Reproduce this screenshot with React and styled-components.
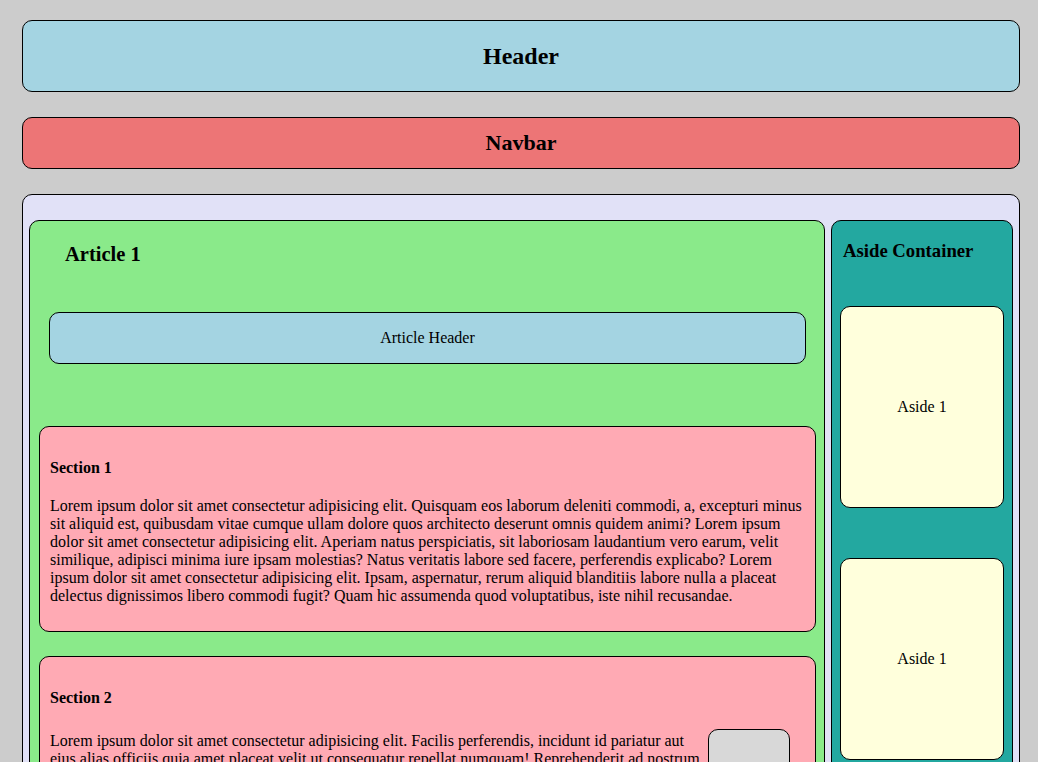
import React from 'react'
import styled, { createGlobalStyle } from 'styled-components'

const GlobalStyle = createGlobalStyle`
	html, body {
		margin: 0;
		background-color: #cccccc;
		font-family: "Liberation Serif", "Times New Roman", serif;
		color: #000;
	}
`

const Page = styled.div`
	padding: 20px 18px 0 22px;
	display: flex;
	flex-direction: column;
	gap: 25px;
`

const Bar = styled.div`
	box-sizing: border-box;
	height: ${(p) => p.$height}px;
	display: flex;
	align-items: center;
	justify-content: center;
	background-color: ${(p) => p.$bg};
	border: 1px solid #000;
	border-radius: 10px;
	font-size: ${(p) => p.$size}px;
	font-weight: bold;
`

const Main = styled.main`
	display: grid;
	grid-template-columns: 1fr 182px;
	gap: 6px;
	align-items: start;
	padding: 25px 6px 20px;
	background-color: #e1e1f7;
	border: 1px solid #000;
	border-radius: 10px;
`

const Article = styled.article`
	padding: 9px 8px 9px 9px;
	background-color: #8aea8a;
	border: 1px solid #000;
	border-radius: 10px;
`

const ArticleTitle = styled.h2`
	margin: 12px 0 0 26px;
	font-size: 20.5px;
	line-height: 24px;
`

const ArticleHeader = styled.header`
	margin: 46px 10px 62px;
	padding: 16px;
	text-align: center;
	font-size: 16px;
	line-height: 18px;
	background-color: #a4d4e2;
	border: 1px solid #000;
	border-radius: 10px;
`

const Section = styled.section`
	margin-bottom: 24px;
	padding: 0 10px;
	background-color: #ffaab4;
	border: 1px solid #000;
	border-radius: 10px;
	overflow: hidden;
`

const SectionTitle = styled.h4`
	margin: 32px 0 20px;
	font-size: 16px;
	line-height: 18px;
`

const Text = styled.p`
	margin: ${(p) => (p.$offset ? '3px 0 26px' : '0 0 26px')};
	font-size: 16px;
	line-height: 18px;
`

const SectionBody = styled.div`
	display: flex;
	align-items: flex-start;
	margin-top: 22px;
`

const Thumb = styled.div`
	flex: none;
	width: 82px;
	height: 120px;
	margin: 0 15px 0 4px;
	box-sizing: border-box;
	background-color: #d8d8d8;
	border: 1px solid #000;
	border-radius: 10px;
`

const Aside = styled.aside`
	padding: 8px 8px 20px;
	background-color: #23a8a0;
	border: 1px solid #000;
	border-radius: 10px;
`

const AsideTitle = styled.h3`
	margin: 11px 0 0 3px;
	font-size: 18.72px;
	line-height: 22px;
`

const AsideList = styled.div`
	display: flex;
	flex-direction: column;
	gap: 50px;
	margin-top: 44px;
`

const AsideCard = styled.div`
	box-sizing: border-box;
	height: 202px;
	display: flex;
	align-items: center;
	justify-content: center;
	font-size: 16px;
	background-color: #ffffdc;
	border: 1px solid #000;
	border-radius: 10px;
`

const loremOne =
	'Lorem ipsum dolor sit amet consectetur adipisicing elit. Quisquam eos laborum deleniti commodi, a, excepturi minus sit aliquid est, quibusdam vitae cumque ullam dolore quos architecto deserunt omnis quidem animi? Lorem ipsum dolor sit amet consectetur adipisicing elit. Aperiam natus perspiciatis, sit laboriosam laudantium vero earum, velit similique, adipisci minima iure ipsam molestias? Natus veritatis labore sed facere, perferendis explicabo? Lorem ipsum dolor sit amet consectetur adipisicing elit. Ipsam, aspernatur, rerum aliquid blanditiis labore nulla a placeat delectus dignissimos libero commodi fugit? Quam hic assumenda quod voluptatibus, iste nihil recusandae.'

const loremTwo =
	'Lorem ipsum dolor sit amet consectetur adipisicing elit. Facilis perferendis, incidunt id pariatur aut eius alias officiis quia amet placeat velit ut consequatur repellat numquam! Reprehenderit ad nostrum voluptates quibusdam eveniet, sequi cumque natus. Lorem ipsum dolor sit amet consectetur adipisicing elit. Omnis, quod.'

const App = () => {
	return (
		<>
			<GlobalStyle />
			<Page>
				<Bar $height={72} $bg="#a4d4e2" $size={24}>
					Header
				</Bar>
				<Bar $height={52} $bg="#ed7576" $size={22}>
					Navbar
				</Bar>
				<Main>
					<Article>
						<ArticleTitle>Article 1</ArticleTitle>
						<ArticleHeader>Article Header</ArticleHeader>
						<Section>
							<SectionTitle>Section 1</SectionTitle>
							<Text>{loremOne}</Text>
						</Section>
						<Section>
							<SectionTitle>Section 2</SectionTitle>
							<SectionBody>
								<Text $offset>{loremTwo}</Text>
								<Thumb />
							</SectionBody>
						</Section>
					</Article>
					<Aside>
						<AsideTitle>Aside Container</AsideTitle>
						<AsideList>
							<AsideCard>Aside 1</AsideCard>
							<AsideCard>Aside 1</AsideCard>
						</AsideList>
					</Aside>
				</Main>
			</Page>
		</>
	)
}

export default App
